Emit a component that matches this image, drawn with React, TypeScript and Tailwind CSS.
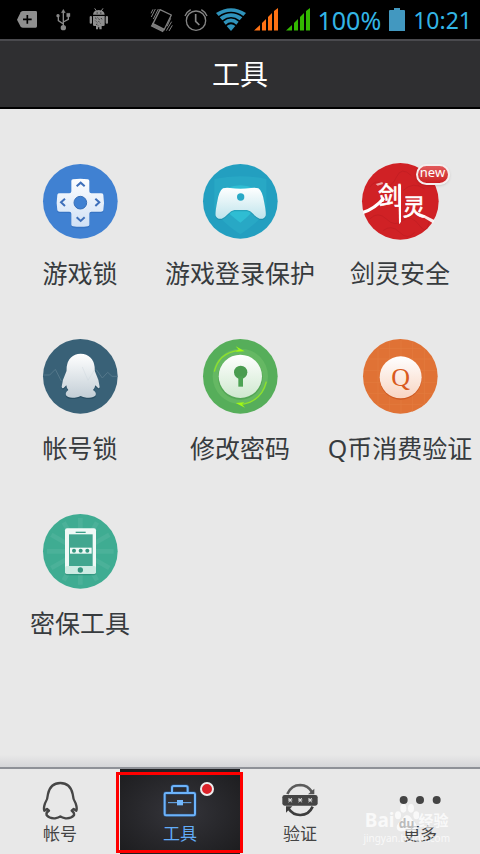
import type { ReactNode } from "react";

const FONT = "font-['Noto_Sans','Noto_Sans_CJK_SC',sans-serif]";

/* ---------- status bar glyphs ---------- */

function NotificationIcons() {
  return (
    <div className="flex items-center gap-3" aria-hidden="true">
      <svg className="h-6 w-6" viewBox="0 0 72 72">
        <path d="M6 35 L17 13 Q20 9 24 9 H62 Q66 9 66 13 V55 Q66 59 62 59 H24 Q20 59 17 56 Z" fill="#8f8f8f" />
        <path d="M37 21 V47 M24 34 H50" stroke="#000" strokeWidth="5" />
      </svg>
      <svg className="h-6 w-6" viewBox="0 0 72 72" fill="none" stroke="#8a8a8a" strokeWidth="4">
        <path d="M37 10 V60 M37 48 L22 38 V26 M37 42 L52 34 V22" />
        <circle cx="37" cy="59" r="6" fill="#8a8a8a" />
        <path d="M37 4 L31 14 H43 Z M47 16 H57 V26 H47 Z" fill="#8a8a8a" strokeWidth="1" />
        <circle cx="21" cy="23" r="3" fill="#8a8a8a" />
      </svg>
      <svg className="h-6 w-6" viewBox="0 0 72 72" fill="#8f8f8f">
        <path d="M18 20 Q19 7 35 6 Q52 7 53 20 Z M18 24 H53 V51 Q53 54 49 54 H44 V64 H37 V58 H33 V64 H27 V54 H22 Q18 54 18 51 Z" />
        <rect x="8" y="24" width="7" height="23" rx="3" />
        <rect x="56" y="24" width="7" height="23" rx="3" />
        <path d="M23 1 L29 10 M48 1 L42 10" stroke="#8f8f8f" strokeWidth="3" />
        <path d="M29 15 H32 M40 15 H43" stroke="#000" strokeWidth="3" />
        <path d="M24 29 L30 34 M32 29 L38 36 M42 30 L46 36 M25 38 L31 44 M35 40 L40 46 M27 48 L34 53" stroke="#222" strokeWidth="3" strokeDasharray="3 3" />
      </svg>
    </div>
  );
}

function SignalIcon({ color }: { color: string }) {
  return (
    <svg className="h-6 w-6" viewBox="0 0 24 24" fill={color} aria-hidden="true">
      <path d="M0 22.5 L6 17 V22.5 Z M8 15 L12 11 V22.5 H8 Z M14 9 L18 5 V22.5 H14 Z M20 3 L24 0 V22.5 H20 Z" />
    </svg>
  );
}

function StatusBar() {
  return (
    <div className="flex h-[39px] items-center justify-between bg-black pl-[15px] pr-2 text-[#33b5e5]">
      <NotificationIcons />
      <div className="flex items-center gap-2">
        <svg className="mr-0.5 h-[26px] w-6" viewBox="0 0 72 78" fill="none" stroke="#808080" strokeWidth="4" aria-hidden="true">
          <path d="M30 8 L64 24 L42 69 L8 52 Z" strokeLinejoin="round" />
          <path d="M9 50 L41 66 L38 73 L5 57 Z" fill="#777" />
          <path d="M4 30 L16 6 M10 36 L25 6 M3 19 L9 7 M49 71 L65 44 M57 72 L67 55 M62 34 L51 58" strokeWidth="3" />
        </svg>
        <svg className="h-6 w-6" viewBox="0 0 72 72" fill="none" stroke="#858585" strokeWidth="4" aria-hidden="true">
          <circle cx="36" cy="38" r="29" />
          <path d="M35 18 V40 L46 51" strokeWidth="5" />
          <path d="M3 24 Q8 12 20 5 M69 24 Q64 12 52 5" />
        </svg>
        <svg className="h-6 w-[30px]" viewBox="0 0 90 72" fill="#2f93bb" aria-hidden="true">
          <path d="M0 15 Q45 -13 90 15 L82 24 Q45 -1 8 24 Z" />
          <path d="M11 28 Q45 4 79 28 L71 37 Q45 17 19 37 Z" />
          <path d="M22 41 Q45 22 68 41 L61 50 Q45 36 29 50 Z" />
          <path d="M32 54 Q45 43 58 54 L45 69 Z" />
        </svg>
        <SignalIcon color="#ff7214" />
        <SignalIcon color="#33b800" />
        <span className="text-[25px] leading-8">100%</span>
        <svg className="h-6 w-4" viewBox="0 0 16 24" fill="#4298c0" aria-hidden="true">
          <path d="M5 0 H11 V2 H15 Q16 2 16 3 V23 H0 V3 Q0 2 1 2 H5 Z" />
        </svg>
        <span className="text-[23px] leading-8">10:21</span>
      </div>
    </div>
  );
}

/* ---------- tool icons ---------- */

function GameLockIcon() {
  return (
    <>
      <defs>
        <linearGradient id="pad" x1="0" y1="0" x2="0" y2="1">
          <stop offset="0" stopColor="#fdfeff" />
          <stop offset="1" stopColor="#cfe0f5" />
        </linearGradient>
      </defs>
      <circle cx="112" cy="112" r="112" fill="#4081d2" />
      <path
        d="M85 51 Q85 47 90 46 Q112 43 134 46 Q139 47 139 51 V82 Q139 88 145 88 H174 Q180 88 181 92 Q185 116 181 139 Q180 143 174 143 H145 Q139 143 139 149 V182 Q139 186 134 187 Q112 190 90 187 Q85 186 85 182 V149 Q85 143 79 143 H50 Q44 143 43 139 Q39 116 43 92 Q44 88 50 88 H79 Q85 88 85 82 Z"
        fill="#2c67b6" opacity="0.5" transform="translate(0 4)"
      />
      <path
        d="M85 51 Q85 47 90 46 Q112 43 134 46 Q139 47 139 51 V82 Q139 88 145 88 H174 Q180 88 181 92 Q185 116 181 139 Q180 143 174 143 H145 Q139 143 139 149 V182 Q139 186 134 187 Q112 190 90 187 Q85 186 85 182 V149 Q85 143 79 143 H50 Q44 143 43 139 Q39 116 43 92 Q44 88 50 88 H79 Q85 88 85 82 Z"
        fill="url(#pad)"
      />
      <circle cx="112" cy="116" r="19" fill="#4081d2" stroke="#376fb8" strokeWidth="3" />
      <path d="M101 67 L113 56 L125 67 M101 160 L113 171 L125 160 M66 104 L54 115 L66 126 M157 104 L169 115 L157 126" fill="none" stroke="#3f70ba" strokeWidth="6" />
    </>
  );
}

function GameGuardIcon() {
  return (
    <>
      <defs>
        <linearGradient id="gamepad" x1="0" y1="0" x2="0" y2="1">
          <stop offset="0" stopColor="#ffffff" />
          <stop offset="1" stopColor="#bfe4ec" />
        </linearGradient>
      </defs>
      <circle cx="112" cy="112" r="112" fill="#239fc0" />
      <path d="M34 45 Q112 28 190 45 V130 Q182 165 112 211 Q42 165 34 130 Z" fill="#28a8c5" />
      <path d="M72 72 Q112 56 152 72 V130 Q150 148 112 176 Q74 148 62 130 Z" fill="#2fbdd3" />
      <path
        d="M60 73 Q70 68 81 73 Q112 79 144 73 Q156 68 166 73 Q178 81 183 112 Q190 146 188 155 Q184 166 170 164 Q160 161 151 150 Q142 140 132 138 H94 Q84 140 75 150 Q65 161 56 164 Q42 166 38 155 Q36 146 43 112 Q48 81 60 73 Z"
        fill="#187d99" opacity="0.4" transform="translate(0 4)"
      />
      <path
        d="M60 73 Q70 70 81 72 Q112 76 144 72 Q156 70 166 73 Q178 81 183 112 Q190 146 188 155 Q184 166 170 164 Q160 161 151 150 Q142 140 132 138 H94 Q84 140 75 150 Q65 161 56 164 Q42 166 38 155 Q36 146 43 112 Q48 81 60 73 Z"
        fill="url(#gamepad)"
      />
      <circle cx="113" cy="99" r="11" fill="#2aa9c6" />
    </>
  );
}

function BladeIcon() {
  return (
    <>
      <circle cx="112" cy="112" r="115" fill="#d02125" />
      <g fill="none" stroke="#b91c20" strokeWidth="3" opacity="0.55">
        <path d="M20 70 Q35 45 60 60 T100 40 T145 35 M120 80 Q150 50 185 75 M20 165 Q45 140 70 165 T120 170 T170 185 T200 155 M60 200 Q85 180 110 205 T155 205 M140 160 Q160 140 180 158" />
      </g>
      <g fill="#fff">
        <g stroke="#fff" strokeWidth="2" fontFamily="'Noto Sans CJK SC', sans-serif">
          <text x="46" y="121" fontSize="72">剑</text>
          <text x="119" y="152" fontSize="68">灵</text>
        </g>
        <path d="M0 140 Q32 130 60 98 L66 106 Q38 139 1 150 Z" />
        <path d="M106 62 L114 64 L114 172 Q110 184 108 178 Z" />
        <path d="M160 144 Q186 152 214 168 L210 178 Q184 160 158 150 Z" opacity="0.9" />
        <path d="M38 60 L58 54 L60 60 L44 65 Z" opacity="0.6" />
      </g>
    </>
  );
}

function AccountLockIcon() {
  return (
    <>
      <defs>
        <linearGradient id="penguin" x1="0" y1="0" x2="0" y2="1">
          <stop offset="0" stopColor="#ffffff" />
          <stop offset="1" stopColor="#c3ced6" />
        </linearGradient>
      </defs>
      <circle cx="112" cy="112" r="112" fill="#396177" />
      <path d="M1 108 H20 L37 91 L55 126 M160 92 L178 117 L194 100 L207 112 H223" fill="none" stroke="#55788b" strokeWidth="3" />
      <path
        d="M113 44 Q76 46 71 84 Q72 98 67 105 Q57 125 56 143 Q58 151 64 145 L70 139 Q71 149 76 153 Q66 160 69 169 Q75 178 95 176 Q107 175 113 171 Q119 175 131 176 Q151 178 158 169 Q161 160 150 153 Q155 149 157 139 L163 145 Q169 151 170 143 Q169 125 159 105 Q154 98 155 84 Q150 46 113 44 Z"
        fill="#1f4356" opacity="0.6" transform="translate(0 4)"
      />
      <path
        d="M113 44 Q76 46 71 84 Q72 98 67 105 Q57 125 56 143 Q58 151 64 145 L70 139 Q71 149 76 153 Q66 160 69 169 Q75 178 95 176 Q107 175 113 171 Q119 175 131 176 Q151 178 158 169 Q161 160 150 153 Q155 149 157 139 L163 145 Q169 151 170 143 Q169 125 159 105 Q154 98 155 84 Q150 46 113 44 Z"
        fill="url(#penguin)"
      />
      <path d="M118 84 L135 124 L155 92" fill="none" stroke="#cbd5dc" strokeWidth="2" opacity="0.6" />
    </>
  );
}

function PasswordIcon() {
  return (
    <>
      <defs>
        <linearGradient id="dial" x1="0" y1="0" x2="0" y2="1">
          <stop offset="0" stopColor="#ffffff" />
          <stop offset="1" stopColor="#cfe8cf" />
        </linearGradient>
      </defs>
      <circle cx="112" cy="112" r="112" fill="#56ae5a" />
      <circle cx="112" cy="112" r="83" fill="#65b863" />
      <circle cx="112" cy="115" r="67" fill="#48994c" opacity="0.6" />
      <circle cx="112" cy="112" r="65" fill="url(#dial)" />
      <path d="M34 98 Q47 42 106 34 M190 128 Q176 186 118 196" fill="none" stroke="#90e329" strokeWidth="4" />
      <path d="M98 22 L125 37 L98 38 L107 32 Z M126 206 L98 192 L124 190 L117 196 Z" fill="#a2fa12" />
      <circle cx="113" cy="100" r="20" fill="#4a9c50" />
      <path d="M106 112 H120 V143 H106 Z" fill="#4da354" />
    </>
  );
}

function QCoinIcon() {
  return (
    <>
      <defs>
        <linearGradient id="coin" x1="0" y1="0" x2="0" y2="1">
          <stop offset="0" stopColor="#ffffff" />
          <stop offset="1" stopColor="#f8d5c2" />
        </linearGradient>
      </defs>
      <circle cx="112" cy="112" r="112" fill="#e07235" />
      <path d="M14 60 H210 M3 95 H222 M3 130 H222 M14 163 H210 M40 196 H184 M45 28 V196 M80 7 V218 M114 2 V222 M149 7 V218 M184 28 V196 M50 28 H175" stroke="#e47c40" strokeWidth="2" />
      <circle cx="113" cy="119" r="63" fill="#c64e18" opacity="0.7" />
      <circle cx="113" cy="115" r="63" fill="url(#coin)" />
      <text x="113" y="140" textAnchor="middle" fontSize="78" fontFamily="'Liberation Serif', serif" fill="#d95a20">Q</text>
    </>
  );
}

function PhoneIcon() {
  return (
    <>
      <circle cx="112" cy="112" r="112" fill="#3fac92" />
      <g stroke="#4bb199" strokeWidth="14">
        <path d="M112 12 V212 M12 112 H212 M62 25 L162 199 M162 25 L62 199 M25 62 L199 162 M25 162 L199 62" />
      </g>
      <rect x="66" y="48" width="93" height="136" rx="6" fill="#238570" opacity="0.6" />
      <rect x="66" y="43" width="93" height="136" rx="6" fill="#eff9f6" />
      <rect x="66" y="156" width="93" height="23" rx="5" fill="#cdebe3" />
      <rect x="78" y="61" width="71" height="95" fill="#41a68f" />
      <rect x="98" y="53" width="30" height="4" fill="#3e9f89" />
      <rect x="81" y="101" width="65" height="18" fill="#eff9f6" />
      <circle cx="93" cy="110" r="6" fill="#35957f" />
      <circle cx="113" cy="110" r="6" fill="#35957f" />
      <circle cx="133" cy="110" r="6" fill="#35957f" />
      <circle cx="112" cy="168" r="8" fill="#35957f" />
    </>
  );
}

const tools: { label: string; icon: ReactNode; isNew?: boolean }[] = [
  { label: "游戏锁", icon: <GameLockIcon /> },
  { label: "游戏登录保护", icon: <GameGuardIcon /> },
  { label: "剑灵安全", icon: <BladeIcon />, isNew: true },
  { label: "帐号锁", icon: <AccountLockIcon /> },
  { label: "修改密码", icon: <PasswordIcon /> },
  { label: "Q币消费验证", icon: <QCoinIcon /> },
  { label: "密保工具", icon: <PhoneIcon /> },
];

function ToolButton({ label, icon, isNew }: { label: string; icon: ReactNode; isNew?: boolean }) {
  return (
    <button type="button" className="flex h-[175px] flex-col items-center pt-[55px]">
      <span className="relative">
        <svg className="block h-[75px] w-[75px] overflow-visible" viewBox="0 0 225 225" aria-hidden="true">
          {icon}
        </svg>
        {isNew && (
          <span className="absolute -right-3 top-0 flex h-[21px] w-[34px] items-center justify-center rounded-full border-2 border-[#f4eeee] bg-linear-to-b from-[#e2595b] to-[#cb1c20] pb-1 text-[13px] leading-none text-white shadow-sm">
            new
          </span>
        )}
      </span>
      <span className="mt-4 whitespace-nowrap text-[25px] leading-9 text-[#373b3e]">{label}</span>
    </button>
  );
}

/* ---------- bottom tabs ---------- */

function TabPenguin() {
  return (
    <path
      d="M61 9 Q31 9 24 42 Q23 58 15 70 Q10 85 13 92 L21 87 L27 92 Q17 97 20 106 Q28 116 45 115 Q56 113 61 109 Q66 113 77 115 Q94 116 102 106 Q104 97 95 92 L101 87 L109 92 Q112 85 107 70 Q99 58 98 42 Q91 9 61 9 Z"
      fill="none" stroke="#464646" strokeWidth="7" strokeLinejoin="round"
    />
  );
}

function TabToolbox() {
  return (
    <>
      <g fill="none" stroke="#2c5f9e" strokeWidth="10" opacity="0.5">
        <rect x="14" y="39" width="91" height="67" rx="4" />
        <path d="M36 37 V23 Q36 18 41 18 H78 Q83 18 83 23 V37" />
      </g>
      <g fill="none" stroke="#6cb3fb" strokeWidth="6">
        <rect x="14" y="39" width="91" height="67" rx="4" />
        <path d="M36 37 V23 Q36 18 41 18 H78 Q83 18 83 23 V37" />
        <path d="M24 68 H94" strokeWidth="3" />
      </g>
      <rect x="51" y="60" width="18" height="16" fill="#74b9fe" />
    </>
  );
}

function TabVerify() {
  return (
    <>
      <path d="M22 42 Q34 15 61 15 Q84 16 96 36" fill="none" stroke="#5b5b5b" strokeWidth="8" />
      <path d="M103 26 V43 H84 Z" fill="#555" />
      <path d="M98 80 Q86 106 60 105 Q38 104 26 86" fill="none" stroke="#3d3d3d" strokeWidth="8" />
      <path d="M18 98 V79 H37 Z" fill="#3d3d3d" />
      <rect x="7" y="45" width="106" height="32" rx="7" fill="#454545" />
      <path d="M26 54 L35 67 M35 54 L26 67 M24 60 H37 M56 54 L65 67 M65 54 L56 67 M54 60 H67 M86 54 L95 67 M95 54 L86 67 M84 60 H97" stroke="#e2e2e2" strokeWidth="3" />
    </>
  );
}

function TabMore() {
  return (
    <g fill="#444">
      <circle cx="11" cy="60" r="12" />
      <circle cx="60" cy="60" r="12" />
      <circle cx="110" cy="60" r="12" />
    </g>
  );
}

const tabs: { label: string; icon: ReactNode; active?: boolean }[] = [
  { label: "帐号", icon: <TabPenguin /> },
  { label: "工具", icon: <TabToolbox />, active: true },
  { label: "验证", icon: <TabVerify /> },
  { label: "更多", icon: <TabMore /> },
];

function Watermark() {
  return (
    <div className="pointer-events-none absolute bottom-2.5 right-[30px] flex flex-col items-center text-white/75" aria-hidden="true">
      <div className="flex items-end text-[19px] font-bold leading-6">
        <span>Bai</span>
        <span className="relative flex h-6 w-6 items-end justify-center">
          <svg className="absolute bottom-0 left-0 h-7 w-6" viewBox="0 0 72 84" fill="currentColor">
            <ellipse cx="9" cy="34" rx="9" ry="12" />
            <ellipse cx="25" cy="13" rx="9" ry="13" />
            <ellipse cx="48" cy="13" rx="9" ry="13" />
            <ellipse cx="64" cy="34" rx="9" ry="12" />
            <path d="M36 34 Q44 34 52 47 Q66 60 66 70 Q64 84 50 82 Q36 78 22 82 Q6 84 5 70 Q5 60 20 47 Q28 34 36 34 Z" />
          </svg>
          <span className="relative text-[12px] leading-4 text-[#bbb]">du</span>
        </span>
        <span className="text-[15px]">经验</span>
      </div>
      <span className="text-[10px] leading-3">jingyan.baidu.com</span>
    </div>
  );
}

function TabBar() {
  return (
    <nav className="relative grid grid-cols-4 border-t-2 border-[#8e9197]">
      {tabs.map((tab) => (
        <button
          key={tab.label}
          type="button"
          aria-current={tab.active ? "page" : undefined}
          className={
            "relative flex flex-col items-center pb-2 pt-[11px] last:border-l last:border-[#a5abb6] " +
            (tab.active ? "bg-radial from-[#35353b] to-[#1c1c1e] text-[#62acf8]" : "text-[#444]")
          }
        >
          <svg className="h-10 w-10 overflow-visible" viewBox="0 0 120 120" aria-hidden="true">
            {tab.icon}
          </svg>
          <span className="mt-0.5 text-[17px] leading-6">{tab.label}</span>
          {tab.active && (
            <>
              <span className="absolute right-[26px] top-[13px] h-3.5 w-3.5 rounded-full border-2 border-[#eee] bg-[#dc2229]" />
              <span className="absolute -left-1 -right-[3px] bottom-px top-[3px] z-10 border-3 border-[#ff0000]" />
            </>
          )}
        </button>
      ))}
      <Watermark />
    </nav>
  );
}

export default function App() {
  return (
    <div className={`flex min-h-screen flex-col bg-[#e8e8e8] ${FONT}`}>
      <StatusBar />
      <header className="flex h-[70px] items-center justify-center border-b-2 border-t-2 border-b-black border-t-[#4a4a4e] bg-[#2f2f31]">
        <h1 className="text-[28px] font-normal leading-10 text-white">工具</h1>
      </header>
      <main className="grid flex-1 grid-cols-3 content-start">
        {tools.map((tool) => (
          <ToolButton key={tool.label} {...tool} />
        ))}
      </main>
      <div className="h-3 bg-linear-to-b from-[#e8e8e8] to-[#d5d6d8]" />
      <TabBar />
    </div>
  );
}
